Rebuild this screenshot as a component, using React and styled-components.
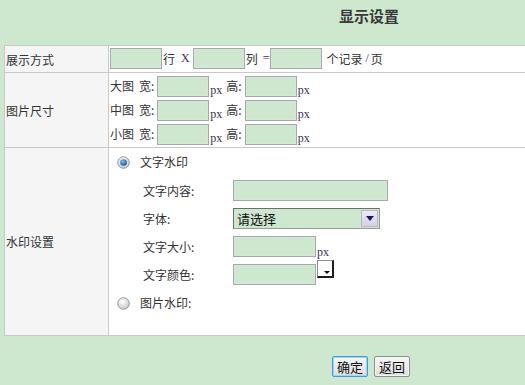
import React from "react";
import styled, { createGlobalStyle } from "styled-components";

const Global = createGlobalStyle`
  html, body { margin: 0; padding: 0; background: #cde8cf; overflow: hidden; }
  body { font-family: "Noto Sans CJK SC", "Liberation Sans", sans-serif; font-size: 12px; color: #333; }
`;

const Page = styled.div`
  width: 525px;
  height: 385px;
  background: #cde8cf;
`;

const Header = styled.div`
  height: 45px;
  box-sizing: border-box;
  padding: 6px 0 0 339px;
`;

const Title = styled.h1`
  margin: 0;
  font-size: 15px;
  line-height: 20px;
  font-weight: bold;
  color: #3a3a3a;
`;

const Grid = styled.div`
  margin-left: 4px;
  width: 521px;
  box-sizing: border-box;
  display: grid;
  grid-template-columns: 104px 1fr;
  border-top: 1px solid #c9c9c9;
  border-left: 1px solid #c9c9c9;
`;

const LabelCell = styled.div`
  box-sizing: border-box;
  height: ${(p) => p.$h}px;
  background: #f5f5f5;
  border-right: 1px solid #c9c9c9;
  border-bottom: 1px solid #c9c9c9;
  display: flex;
  align-items: center;
  padding-left: 1px;
  color: #333;
`;

const ValueCell = styled.div`
  box-sizing: border-box;
  height: ${(p) => p.$h}px;
  background: #fff;
  border-bottom: 1px solid #c9c9c9;
  padding: ${(p) => p.$pad || "0 0 0 1px"};
`;

const Line = styled.div`
  display: flex;
  align-items: center;
  height: ${(p) => p.$h || 24}px;
`;

const Text = styled.span`
  margin-left: ${(p) => p.$ml || 0}px;
  white-space: pre;
  line-height: 14px;
`;

const Serif = styled.span`
  font-family: "Liberation Serif", serif;
  font-size: 12px;
  margin-left: ${(p) => p.$ml || 0}px;
  align-self: ${(p) => p.$self || "center"};
  color: #3b2f55;
`;

const Input = styled.input`
  box-sizing: border-box;
  width: ${(p) => p.$w || 52}px;
  height: 21px;
  margin: 0 0 0 ${(p) => p.$ml || 0}px;
  padding: 0 2px;
  border: 1px solid #a4aaaa;
  box-shadow: inset 0 0 0 1px #d8e6da;
  background: #cde8cf;
  font-size: 12px;
  outline: none;
`;

const SelectBox = styled.div`
  box-sizing: border-box;
  width: 147px;
  height: 21px;
  border: 1px solid #9a9a9a;
  border-top-color: #6e6e6e;
  border-left-color: #6e6e6e;
  background: #cde8cf;
  display: flex;
  align-items: center;
  justify-content: space-between;
  font-size: 13px;
  color: #111;
  padding-left: 3px;
`;

const SelectArrow = styled.div`
  width: 17px;
  height: 17px;
  margin-right: 1px;
  box-sizing: border-box;
  background: linear-gradient(#eceaf4, #d4d2e2);
  border: 1px solid #b8b6c8;
  display: flex;
  align-items: center;
  justify-content: center;
`;

const ColorPick = styled.div`
  box-sizing: border-box;
  width: 17px;
  height: 18px;
  margin-left: 1px;
  align-self: flex-start;
  background: #fff;
  border-top: 1px solid #8c8c8c;
  border-left: 1px solid #8c8c8c;
  border-right: 2px solid #1e1e1e;
  border-bottom: 2px solid #1e1e1e;
  position: relative;
`;

const PickArrow = styled.div`
  position: absolute;
  right: 2px;
  bottom: 2px;
  width: 0;
  height: 0;
  border-left: 3px solid transparent;
  border-right: 3px solid transparent;
  border-top: 3px solid #111;
`;

const RadioLine = styled.div`
  display: flex;
  align-items: center;
  height: ${(p) => p.$h}px;
  padding-left: 8px;
`;

const SubRow = styled.div`
  display: flex;
  align-items: center;
  height: 28px;
  padding-left: 34px;
`;

const SubLabel = styled.span`
  width: 90px;
  align-self: center;
`;

const Footer = styled.div`
  display: flex;
  gap: 6px;
  padding: 20px 0 0 332px;
`;

const Button = styled.button`
  box-sizing: border-box;
  width: 36px;
  height: 21px;
  padding: 0;
  font-family: "Noto Sans CJK SC", sans-serif;
  font-size: 13px;
  line-height: 17px;
  color: #111;
  border-radius: 2px;
  border: 1px solid ${(p) => (p.$focus ? "#3a9fdc" : "#8f8f8f")};
  box-shadow: inset 0 0 0 1px ${(p) => (p.$focus ? "#9fd2f0" : "#f4f4f4")};
  background: linear-gradient(#f7f7f7, #dedede);
`;

function Radio({ checked }) {
  return (
    <svg width="13" height="13" viewBox="0 0 13 13">
      <defs>
        <radialGradient id="rg" cx="0.4" cy="0.35" r="0.7">
          <stop offset="0" stopColor="#ffffff" />
          <stop offset="1" stopColor="#c4c6c8" />
        </radialGradient>
        <radialGradient id="rb" cx="0.4" cy="0.35" r="0.7">
          <stop offset="0" stopColor="#7fc4f0" />
          <stop offset="1" stopColor="#0e4f8c" />
        </radialGradient>
      </defs>
      <circle cx="6.5" cy="6.5" r="5.8" fill="url(#rg)" stroke="#8d9196" strokeWidth="0.9" />
      {checked && <circle cx="6.5" cy="6.5" r="3.3" fill="url(#rb)" />}
    </svg>
  );
}

function SizeLine({ name }) {
  return (
    <Line $h={24}>
      <Text>{name}</Text>
      <Text $ml={5}>宽:</Text>
      <Input $ml={3} />
      <Serif $ml={1} $self="flex-end">px</Serif>
      <Text $ml={4}>高:</Text>
      <Input $ml={3} />
      <Serif $ml={1} $self="flex-end">px</Serif>
    </Line>
  );
}

export default function App() {
  return (
    <Page>
      <Global />
      <Header>
        <Title>显示设置</Title>
      </Header>
      <Grid>
        <LabelCell $h={27}>展示方式</LabelCell>
        <ValueCell $h={27} $pad="2px 0 0 1px">
          <Line $h={21}>
            <Input />
            <Text $ml={1}>行</Text>
            <Serif $ml={6}>X</Serif>
            <Input $ml={3} />
            <Text $ml={1}>列</Text>
            <Serif $ml={5}>=</Serif>
            <Input $ml={1} />
            <Text $ml={4}>个记录</Text>
            <Serif $ml={3}>/</Serif>
            <Text $ml={2}>页</Text>
          </Line>
        </ValueCell>

        <LabelCell $h={75}>图片尺寸</LabelCell>
        <ValueCell $h={75} $pad="1px 0 0 1px">
          <SizeLine name="大图" />
          <SizeLine name="中图" />
          <SizeLine name="小图" />
        </ValueCell>

        <LabelCell $h={188}>水印设置</LabelCell>
        <ValueCell $h={188} $pad="0">
          <RadioLine $h={28}>
            <Radio checked />
            <Text $ml={10}>文字水印</Text>
          </RadioLine>
          <SubRow>
            <SubLabel>文字内容:</SubLabel>
            <Input $w={155} />
          </SubRow>
          <SubRow>
            <SubLabel>字体:</SubLabel>
            <SelectBox>
              <span>请选择</span>
              <SelectArrow>
                <svg width="8" height="5" viewBox="0 0 8 5">
                  <path d="M0 0 L8 0 L4 5 Z" fill="#1a1a5a" />
                </svg>
              </SelectArrow>
            </SelectBox>
          </SubRow>
          <SubRow>
            <SubLabel>文字大小:</SubLabel>
            <Input $w={83} />
            <Serif $ml={1} $self="flex-end">px</Serif>
          </SubRow>
          <SubRow>
            <SubLabel>文字颜色:</SubLabel>
            <Input $w={83} />
            <ColorPick>
              <PickArrow />
            </ColorPick>
          </SubRow>
          <RadioLine $h={30}>
            <Radio />
            <Text $ml={10}>图片水印:</Text>
          </RadioLine>
        </ValueCell>
      </Grid>
      <Footer>
        <Button $focus>确定</Button>
        <Button>返回</Button>
      </Footer>
    </Page>
  );
}
